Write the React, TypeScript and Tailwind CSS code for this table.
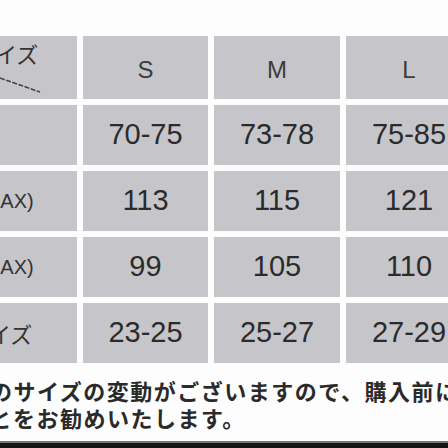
const sizes = ['S', 'M', 'L']

const rows: { label?: string; offset: string; values: string[] }[] = [
  { offset: '', values: ['70-75', '73-78', '75-85'] },
  { label: '(MAX)', offset: 'ml-[-23px]', values: ['113', '115', '121'] },
  { label: '(MAX)', offset: 'ml-[-23px]', values: ['99', '105', '110'] },
  { label: 'サイズ', offset: 'ml-[-33px]', values: ['23-25', '25-27', '27-29'] },
]

const jp = "font-['Noto_Sans_CJK_JP','Liberation_Sans',sans-serif]"
const num = "font-['Liberation_Sans',Arial,sans-serif]"

export default function App() {
  return (
    <div className="flex h-[448px] w-[448px] flex-col overflow-hidden bg-[#fdfdfd]">
      <div className="h-[36px] shrink-0" />

      <div className="grid shrink-0 grid-cols-[77px_125px_126px_126px] grid-rows-[63px_60px_60px_60px_60px] gap-[6px]">
        {/* corner cell */}
        <div className="relative overflow-hidden bg-[#c6c6ca]">
          <div className={`ml-[-27px] mt-[4px] whitespace-nowrap text-[22px] leading-[26px] text-[#333] ${jp}`}>
            サイズ
          </div>
          <svg className="absolute left-0 top-[40px]" width="44" height="18" viewBox="0 0 44 18">
            <line x1="0" y1="2" x2="40" y2="16" stroke="#444" strokeWidth="1.6" strokeDasharray="5 1.5" />
          </svg>
        </div>
        {sizes.map((s) => (
          <div
            key={s}
            className={`flex items-center justify-center bg-[#c6c6ca] pt-[4px] text-[24px] text-[#3c3c3c] ${num}`}
          >
            {s}
          </div>
        ))}

        {rows.map((r, i) => (
          <>
            <div key={`l${i}`} className="flex items-center overflow-hidden bg-[#c6c6ca]">
              {r.label && (
                <span
                  className={`${r.offset} whitespace-nowrap text-[#333] ${
                    r.label === '(MAX)' ? `text-[20px] ${num}` : `text-[22px] ${jp}`
                  }`}
                >
                  {r.label}
                </span>
              )}
            </div>
            {r.values.map((v, j) => (
              <div
                key={`v${i}${j}`}
                className={`flex items-center justify-center bg-[#c6c6ca] text-[29px] text-[#2b2b2b] ${num}`}
              >
                {v}
              </div>
            ))}
          </>
        ))}
      </div>

      <div className={`h-[78px] shrink-0 pt-[14px] text-[22px] font-bold leading-[27px] tracking-[1.5px] text-[#2a2a2a] ${jp}`}>
        <div className="ml-[-10px] whitespace-nowrap">のサイズの変動がございますので、購入前に</div>
        <div className="ml-[-34px] whitespace-nowrap">ことをお勧めいたします。</div>
      </div>

      <div className="h-[7px] shrink-0 border-t-2 border-[#777] bg-[#141414]" />
    </div>
  )
}
